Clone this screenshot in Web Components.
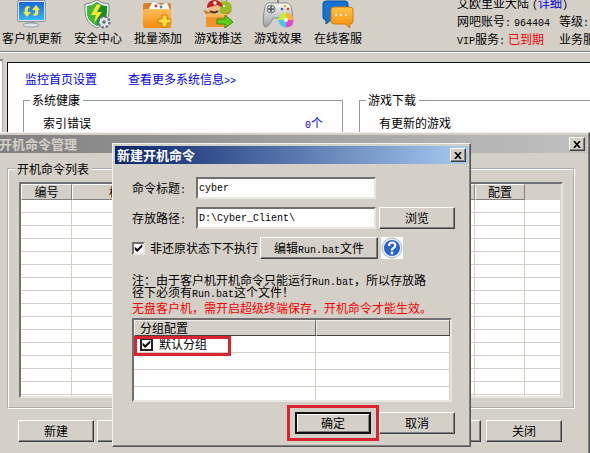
<!DOCTYPE html>
<html lang="zh-CN">
<head>
<meta charset="utf-8">
<title>新建开机命令</title>
<style>
    html, body { margin: 0; height: 100%; }
    body {
        --face: #d4d0c8;
        overflow: hidden;
        background: var(--face);
        font: 12px/18px "Noto Sans CJK SC", sans-serif;
        color: #000;
    }
</style>
</head>
<body>
<client-console></client-console>

<script>
    // classic raised and sunken edges
    const base = `
        * { box-sizing: border-box; }
        a { color: #0000e0; text-decoration: none; }
        code, .mono { font: 10px/1 "Liberation Mono", "Noto Sans CJK SC", monospace; }
        .raised { border: 1px solid; border-color: #fff #404040 #404040 #fff; box-shadow: inset -1px -1px #808080; background: #d4d0c8; }
        .sunken { border: 2px solid; border-color: #707070 #e8e6e0 #e8e6e0 #707070; background: #fff; }
    `;

    function define(name, build) {
        window.customElements.define(name, class extends HTMLElement {
            constructor() {
                super();
                this.attachShadow({ mode: 'open' });
            }
            connectedCallback() {
                const template = document.createElement('template');
                template.innerHTML = `<style>${base}</style>` + build(this);
                this.shadowRoot.replaceChildren(template.content.cloneNode(true));
            }
        });
    }

    const icons = {
        update: `<defs><linearGradient id="s" x2="0" y2="1"><stop stop-color="#1766d8"/><stop offset="1" stop-color="#35b4f5"/></linearGradient></defs>
            <path d="M10 20h8l1 5H9z" fill="#a9b0b8"/><ellipse cx="14" cy="25" rx="8" ry="2" fill="#dfe3e7" stroke="#7c858d" stroke-width=".7"/>
            <rect x=".5" y=".5" width="28" height="21" rx="1.5" fill="#dde3e8" stroke="#8b949c"/><rect x="2" y="2" width="25" height="18" fill="url(#s)"/>
            <path d="M12 6c-4 0-5 3-4 6H6l4 5 4-5h-3c-1-2 0-4 2-4zM17 16c4 0 5-3 4-6h2l-4-5-4 5h3c1 2 0 4-2 4z" fill="#ffe83b"/>`,
        shield: `<path d="M14 0q6 4 12 4v7q0 12-12 17Q2 23 2 11V4q6 0 12-4z" fill="#f3f6f3" stroke="#60716a" stroke-width=".8"/>
            <path d="M14 2q5 4 10 4v6q0 9-10 14Q4 21 4 12V6q5 0 10-4z" fill="#168d26"/><path d="M14 2v24Q4 21 4 12V6q5 0 10-4z" fill="#42b83a"/>
            <path d="M14 4L8 15h5l-2 8 8-11h-5l4-7z" fill="#ffe52c"/>
            <circle cx="21" cy="22" r="5" fill="#e9ecee" stroke="#66717a" stroke-width="3" stroke-dasharray="2.2 1.7"/><circle cx="21" cy="22" r="4.3" fill="#e1e6ea"/><circle cx="21" cy="22" r="1.8" fill="#64717b"/>`,
        folder: `<defs><linearGradient id="f" x2="0" y2="1"><stop stop-color="#ffc05b"/><stop offset="1" stop-color="#f28a0d"/></linearGradient></defs>
            <rect x="0" y="3" width="28" height="24" rx="3" fill="#d98119"/><path d="M5 10L10 1l8 4 6-3 3 8z" fill="#fff" stroke="#a7a7a7" stroke-width=".6"/>
            <circle cx="13" cy="6" r="1.4" fill="#d33"/><circle cx="18" cy="7" r="1.4" fill="#48a"/><rect x="0" y="9" width="28" height="19" rx="2" fill="url(#f)"/>
            <path d="M19 15h5v4h4v4h-4v4h-5v-4h-4v-4h4z" fill="#ffdd45" stroke="#d07808"/>`,
        push: `<circle cx="22" cy="8" r="7" fill="#9abc2b"/><path d="M23 1l3-3M19 1l-2-3" stroke="#789b20"/><circle cx="21" cy="6" r="1" fill="#fff"/>
            <circle cx="11" cy="9" r="6" fill="#f0bd8a"/><path d="M4 8q0-8 8-8 6 0 8 7L14 5z" fill="#c32020"/><path d="M7 11q4 3 8 0" stroke="#4b271b" stroke-width="2" fill="none"/><circle cx="12" cy="3" r="1.7" fill="#fff"/>
            <path d="M3 14h22v13H3z" fill="#f1922a"/><path d="M3 14L0 10l9 3M25 14l4-3-7 2z" fill="#d5741b"/><path d="M3 14h22v3H3z" fill="#ffb65a"/>
            <path d="M14 19h8v-4l8 7-8 6v-4h-8z" fill="#62cc20" stroke="#348b13"/>`,
        pad: `<defs><linearGradient id="g" x2="0" y2="1"><stop stop-color="#f7f7f7"/><stop offset="1" stop-color="#9b9fa3"/></linearGradient></defs>
            <path d="M15 4V0" stroke="#777" stroke-width="1.5"/><path d="M6 3h18q4 0 5 8 2 13-1 15-3 0-8-8H10q-4 9-8 9-3-2-1-15Q2 3 6 3z" fill="url(#g)" stroke="#777" stroke-width=".8"/>
            <circle cx="8" cy="9" r="4" fill="#d4d7d9" stroke="#777"/><path d="M8 6v6M5 9h6" stroke="#555" stroke-width="1.5"/>
            <circle cx="22" cy="6" r="1.3" fill="#e3b320"/><circle cx="19" cy="9" r="1.3" fill="#36b"/><circle cx="25" cy="9" r="1.3" fill="#d33"/>
            <g stroke-width="7" fill="none"><path d="M19 20a4 4 0 0 1 4-4" stroke="#c2ef36"/><path d="M23 16a4 4 0 0 1 4 4" stroke="#ffb149"/><path d="M27 20a4 4 0 0 1-4 4" stroke="#ee43cb"/><path d="M23 24a4 4 0 0 1-4-4" stroke="#43c8ec"/></g><circle cx="23" cy="20" r="2" fill="#fff"/>`,
        chat: `<defs><linearGradient id="c" x2="0" y2="1"><stop stop-color="#ffc247"/><stop offset="1" stop-color="#f38e0d"/></linearGradient></defs>
            <path d="M3 1h19q3 0 3 3v13q0 3-3 3H8l-5 4v-4q-3 0-3-3V4q0-3 3-3z" fill="#1473d2" stroke="#0b55a1"/>
            <path d="M11 7h16q3 0 3 3v11q0 3-3 3v4l-5-4H11q-3 0-3-3V10q0-3 3-3z" fill="url(#c)" stroke="#d27b0b"/><g fill="#fff"><circle cx="13" cy="15" r="1"/><circle cx="18" cy="15" r="1"/><circle cx="23" cy="15" r="1"/></g>`
    };

    define('tool-item', el => `
        <style>
            :host { display: block; flex: none; }
            button { display: flex; flex-direction: column; align-items: center; padding: 0; border: 0; background: none; font: inherit; color: inherit; }
            svg { overflow: visible; }
            span { white-space: nowrap; }
        </style>
        <button type="button"><svg width="30" height="29" viewBox="0 0 30 29">${icons[el.getAttribute('icon')]}</svg><span><slot></slot></span></button>`);

    define('account-info', () => `
        <style>
            :host { display: block; flex: none; }
            div { display: grid; grid-template-columns: 102px auto; grid-auto-rows: 18px; }
            p { display: flex; align-items: baseline; gap: 3px; margin: 0; white-space: nowrap; }
            .name { grid-column: 1 / 3; }
            .late { color: #e00; }
        </style>
        <div>
            <p class="name"><span>艾欧里亚大陆</span><span><code>(</code><a href="#">详细</a><code>)</code></span></p>
            <p><span>网吧账号<code>:</code></span><code>964404</code></p><p><span>等级<code>:</code></span></p>
            <p><span><code>VIP</code>服务<code>:</code></span><span class="late">已到期</span></p><p>业务服务</p>
        </div>`);

    define('group-box', el => `
        <style>
            :host { display: block; }
            fieldset { height: 100%; margin: 0; padding: 0 10px; min-width: 0; border: 1px solid #999; }
            :host([etched]) fieldset { border: 2px groove #fff; padding: 4px 10px 9px; }
            legend { margin-left: -4px; padding: 0 3px 0 2px; line-height: 18px; }
            :host([open]) fieldset { border-right: 0; }
        </style>
        <fieldset><legend>${el.getAttribute('label')}</legend><slot></slot></fieldset>`);

    define('win-button', el => `
        <style>
            :host { display: block; flex: none; width: 76px; }
            button { width: 100%; height: 22px; padding: 0; font: inherit; line-height: 18px; color: inherit; white-space: nowrap; }
            :host([default]) button { border: 2px solid #111; box-shadow: inset 1px 1px #fff, inset -1px -1px #808080; }
        </style>
        <button type="button" class="raised" aria-label="${el.getAttribute('label') || el.textContent}"><slot></slot></button>`);

    define('win-frame', el => `
        <style>
            :host { display: block; }
            section { padding: 2px; background: var(--face); border: 1px solid; border-color: #f4f2ee #555 #555 #f4f2ee; box-shadow: inset -1px -1px #808080; }
            header { display: flex; align-items: center; justify-content: space-between; height: 18px; padding: 0 2px; background: linear-gradient(90deg, #0a246a, #a6caf0); color: #fff; }
            h1 { margin: 0; font-size: 13px; line-height: 18px; font-weight: bold; white-space: nowrap; }
            header button { display: grid; place-items: center; width: 16px; height: 14px; padding: 0; }
            :host([inactive]) header { background: linear-gradient(90deg, #808080, #c0c0c0); color: #d4d0c8; }
            :host([inactive]) h1 { margin-left: -3px; }
        </style>
        <section>
            <header><h1>${el.getAttribute('label')}</h1>
            <button type="button" class="raised" aria-label="关闭窗口"><svg width="8" height="7" viewBox="0 0 8 7"><path d="M1 0l6 7M7 0L1 7" stroke="#000" stroke-width="1.6"/></svg></button></header>
            <slot></slot>
        </section>`);

    define('text-field', el => `
        <style>
            :host { display: flex; align-items: center; }
            label { flex: none; width: 64px; }
            input { width: 180px; height: 22px; padding: 0 1px; outline: 0; }
        </style>
        <label for="f">${el.getAttribute('label')}<span class="mono">:</span></label>
        <input id="f" type="text" class="sunken mono" value="${el.getAttribute('value')}">`);

    define('check-field', el => `
        <style>
            :host { display: flex; align-items: center; gap: 5px; white-space: nowrap; }
            input { appearance: none; flex: none; display: grid; place-items: center; width: 13px; height: 13px; margin: 0; }
            input:checked::before { content: ""; width: 9px; height: 9px; background: #000; clip-path: polygon(8% 35%, 36% 62%, 92% 8%, 92% 40%, 36% 95%, 8% 68%); }
            :host([flat]) input { border: 2px solid #222; }
        </style>
        <input id="c" type="checkbox" class="sunken" checked><label for="c">${el.getAttribute('label')}</label>`);

    define('command-table', () => `
        <style>
            :host { display: block; }
            div { height: 216px; overflow: hidden; }
            table { width: 100%; border-collapse: separate; border-spacing: 0; table-layout: fixed; }
            th { height: 15px; padding: 0; font-weight: normal; line-height: 14px; background: var(--face); border: 1px solid; border-color: #fff #808080 #808080 #fff; white-space: nowrap; overflow: hidden; }
            th:last-child { border-color: var(--face); }
            .title { text-align: left; padding-left: 36px; }
            td { height: 13px; padding: 0; border: solid #d4d0c8; border-width: 0 1px 1px 0; }
        </style>
        <div class="sunken"><table>
            <colgroup><col style="width:51px"><col><col style="width:50px"><col style="width:36px"></colgroup>
            <thead><tr><th>编号</th><th class="title">标题</th><th>配置</th><th></th></tr></thead>
            <tbody>${'<tr><td></td><td></td><td></td><td></td></tr>'.repeat(16)}</tbody>
        </table></div>`);

    define('group-table', () => `
        <style>
            :host { display: block; }
            div { height: 84px; overflow: hidden; }
            table { width: 100%; border-collapse: separate; border-spacing: 0; table-layout: fixed; }
            th { height: 16px; padding: 0 5px; text-align: left; font-weight: normal; line-height: 14px; background: var(--face); border: 1px solid; border-color: #eee #666 #444 #eee; }
            td { position: relative; height: 17px; padding: 0; border: solid #d4d0c8; border-width: 0 1px 1px 0; }
            check-field { height: 16px; padding-left: 6px; gap: 6px; line-height: 16px; }
            .mark { position: absolute; left: 0; top: 0; width: 97px; height: 20px; border: 3px solid #d9232e; pointer-events: none; z-index: 1; }
        </style>
        <div class="sunken"><table>
            <colgroup><col style="width:182px"><col></colgroup>
            <thead><tr><th>分组配置</th><th></th></tr></thead>
            <tbody><tr><td><check-field flat label="默认分组"></check-field><i class="mark"></i></td><td></td></tr>
            ${'<tr><td></td><td></td></tr>'.repeat(4)}</tbody>
        </table></div>`);

    define('help-button', () => `
        <style>
            :host { display: block; flex: none; }
            button { display: block; width: 22px; height: 22px; padding: 0; border: 0; background: #fff; }
            svg { display: block; }
        </style>
        <button type="button" aria-label="帮助"><svg width="22" height="22" viewBox="0 0 22 22"><circle cx="11" cy="11" r="10" fill="#e9edf3" stroke="#a9b3c4"/><circle cx="11" cy="11" r="8" fill="#2863c9"/>
        <path d="M8 9q0-3.5 3.2-3.5T14.2 8.5Q14.2 10 12.5 11T11 13.5" fill="none" stroke="#fff" stroke-width="2.2"/><circle cx="11" cy="16" r="1.4" fill="#fff"/></svg></button>`);

    define('monitor-page', () => `
        <style>
            :host { display: flex; gap: 4px; margin-top: 9px; }
            .edge { flex: none; width: 3px; height: 100px; background: #fff; border-top: 2px solid #808080; border-right: 1px solid #aaa; margin-top: -2px; }
            main { flex: 1; min-width: 0; margin-top: 1px; padding: 7px 0 0 15px; height: 100px; border: solid #111; border-width: 1px 0 0 1px; background: #fff; }
            nav { display: flex; gap: 31px; height: 18px; padding-left: 2px; }
            .groups { display: flex; gap: 16px; margin-top: 3px; }
            group-box { height: 80px; }
            group-box:first-child { flex: none; width: 320px; }
            group-box:last-child { flex: 1; }
            .line { display: flex; justify-content: space-between; padding: 5px 9px; }
        </style>
        <div class="edge"></div>
        <main>
            <nav><a href="#">监控首页设置</a><a href="#">查看更多系统信息<code>&gt;&gt;</code></a></nav>
            <div class="groups">
                <group-box label="系统健康"><div class="line"><span>索引错误</span><a href="#"><code>0</code>个</a></div></group-box>
                <group-box open label="游戏下载"><div class="line"><span>有更新的游戏</span></div></group-box>
            </div>
        </main>`);

    define('command-dialog', () => `
        <style>
            :host { display: block; }
            .body { display: flex; flex-direction: column; padding: 13px 13px 10px 17px; }
            .row { display: flex; align-items: center; gap: 3px; }
            .path { margin-top: 8px; }
            .option { margin-top: 8px; gap: 2px; }
            .option win-button { width: 118px; }
            .option help-button { margin-left: 1px; }
            p { margin: 0; white-space: nowrap; line-height: 12px; }
            /* keeps the mono runs from opening up the tight lines */
            p code { line-height: 0; }
            .note { margin-top: 15px; }
            .warn { margin-top: 1px; line-height: 18px; color: #f00000; }
            group-table { width: 320px; margin-top: 1px; }
            .actions { display: flex; justify-content: flex-end; gap: 8px; margin-top: 10px; }
            .ok { position: relative; }
            .ok i { position: absolute; inset: -7px -8px; border: 3px solid #d9232e; pointer-events: none; }
        </style>
        <win-frame label="新建开机命令">
            <div class="body">
                <text-field label="命令标题" value="cyber"></text-field>
                <div class="row path"><text-field label="存放路径" value="D:\\Cyber_Client\\"></text-field><win-button>浏览</win-button></div>
                <div class="row option"><check-field label="非还原状态下不执行"></check-field><win-button>编辑<code>Run.bat</code>文件</win-button><help-button></help-button></div>
                <p class="note">注：由于客户机开机命令只能运行<code>Run.bat</code>，所以存放路<br>径下必须有<code>Run.bat</code>这个文件！</p>
                <p class="warn">无盘客户机，需开启超级终端保存，开机命令才能生效。</p>
                <group-table></group-table>
                <div class="actions"><div class="ok"><win-button default>确定</win-button><i></i></div><win-button>取消</win-button></div>
            </div>
        </win-frame>`);

    define('command-manager', () => `
        <style>
            :host { display: block; }
            .body { padding: 7px 12px 14px 7px; }
            .buttons { display: flex; gap: 3px; padding: 11px 13px 12px 11px; }
            .buttons .gap { flex: 1; }
            .buttons .last { margin-left: 2px; }
        </style>
        <win-frame inactive label="开机命令管理">
            <div class="body">
                <group-box etched label="开机命令列表"><command-table></command-table></group-box>
                <div class="buttons"><win-button>新建</win-button><win-button label="修改"></win-button><span class="gap"></span><win-button label="应用"></win-button><win-button class="last">关闭</win-button></div>
            </div>
        </win-frame>`);

    define('client-console', () => `
        <style>
            :host { display: block; position: relative; height: 100%; overflow: hidden; }
            .toolbar { display: flex; height: 52px; padding-left: 2px; border-bottom: 1px solid #808080; box-shadow: 0 1px #fff; }
            .tools { display: flex; gap: 12px; flex: none; width: 455px; }
            account-info { margin-top: -6px; }
            /* floating windows */
            command-manager { position: absolute; left: -3px; right: 0; top: 132px; }
            command-dialog { position: absolute; left: 112px; top: 143px; width: 359px; }
        </style>
        <div class="toolbar">
            <div class="tools">
                <tool-item icon="update">客户机更新</tool-item><tool-item icon="shield">安全中心</tool-item><tool-item icon="folder">批量添加</tool-item>
                <tool-item icon="push">游戏推送</tool-item><tool-item icon="pad">游戏效果</tool-item><tool-item icon="chat">在线客服</tool-item>
            </div>
            <account-info></account-info>
        </div>
        <monitor-page></monitor-page>
        <command-manager></command-manager>
        <command-dialog></command-dialog>`);
</script>
</body>
</html>
